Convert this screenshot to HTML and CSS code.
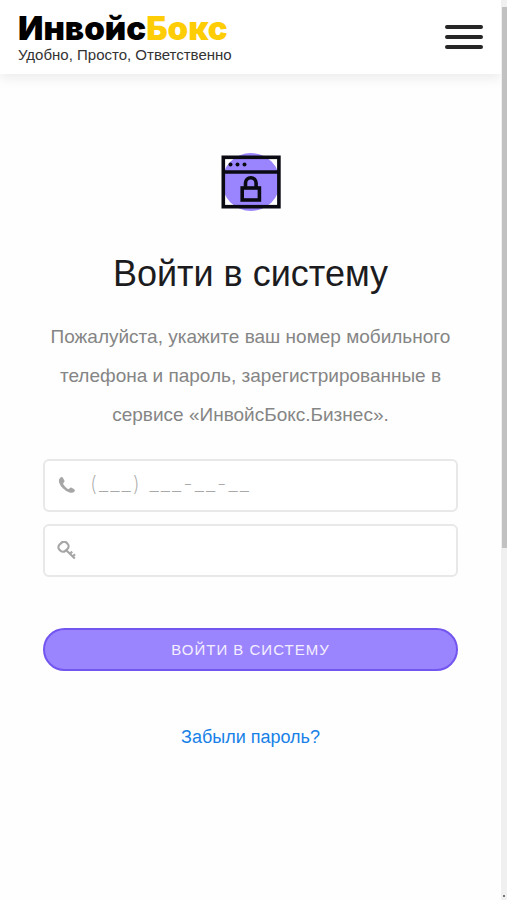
FILE: index.html
```html
<!DOCTYPE html>
<html lang="ru">
<head>
  <meta charset="utf-8">
  <meta name="viewport" content="width=device-width, initial-scale=1">
  <title>Войти в систему</title>
  <link rel="stylesheet" href="styles.css">
</head>
<body>
  <div class="page">
    <header class="header">
      <a class="logo" href="#">
        <span class="logo-name">Инвойс<span class="logo-accent">Бокс</span></span>
        <span class="logo-tagline">Удобно, Просто, Ответственно</span>
      </a>
      <button class="menu-button" type="button" aria-label="Меню">
        <span class="menu-line"></span>
        <span class="menu-line"></span>
        <span class="menu-line"></span>
      </button>
    </header>
    <main class="login">
      <svg class="login-icon" viewBox="0 0 60 60" aria-hidden="true">
        <circle cx="30" cy="30" r="29" fill="#9b85ff"/>
        <g fill="none" stroke="#0a0a12" stroke-width="3.6">
          <rect x="2.300" y="5.300" width="55.600" height="49.400"/>
          <path d="M2 20H59"/>
          <rect x="21.200" y="36" width="17.200" height="12"/>
          <path d="M24.500 36v-5a5.300 5.300 0 0 1 10.600 0v5"/>
        </g>
        <g fill="#0a0a12">
          <circle cx="9.500" cy="12.500" r="2"/>
          <circle cx="16.500" cy="12.500" r="2"/>
          <circle cx="23.500" cy="12.500" r="2"/>
        </g>
      </svg>
      <h1 class="title">Войти в систему</h1>
      <p class="intro">Пожалуйста, укажите ваш номер мобильного телефона и пароль, зарегистрированные в сервисе «ИнвойсБокс.Бизнес».</p>
      <form class="form">
        <div class="field">
          <label class="field-label" for="phone" aria-label="Телефон">
            <svg class="field-icon" viewBox="0 0 20 20">
              <path fill="#a6a6a6" d="M3.200 1.700Q5 .3 6 1.900L7.400 4.500Q8 5.900 6.600 6.800Q5.800 7.400 6.300 8.300Q8 11.200 10.900 12.900Q11.800 13.300 12.400 12.500Q13.300 11.100 14.700 11.800L17.200 13.200Q18.600 14 17.400 15.700Q15.700 17.500 12.500 16.500Q4.500 13.500 2 6.300Q1.300 3.300 3.200 1.700Z"/>
            </svg>
          </label>
          <input class="field-input" id="phone" type="tel" placeholder="(___) ___-__-__">
        </div>
        <div class="field">
          <label class="field-label" for="password" aria-label="Пароль">
            <svg class="field-icon" viewBox="0 0 20 20" fill="none" stroke="#a6a6a6" stroke-width="2.200">
              <rect x="1.500" y="1.500" width="10" height="8.500" rx="3.600" transform="rotate(-42 6.500 5.750)"/>
              <path d="M9 9L17.800 17.500M13 12.800l2.200-2.200M15.800 15.500l2.200-2.200"/>
            </svg>
          </label>
          <input class="field-input" id="password" type="password">
        </div>
        <button class="submit" type="submit">Войти в систему</button>
      </form>
      <a class="forgot" href="#">Забыли пароль?</a>
    </main>
  </div>
  <div class="scrollbar" aria-hidden="true">
    <span class="scroll-arrow"></span>
    <span class="scroll-thumb"></span>
    <span class="scroll-rest"></span>
    <span class="scroll-arrow scroll-arrow-down"></span>
  </div>
</body>
</html>
```
FILE: styles.css
```css
* {
  box-sizing: border-box;
}

body {
  display: flex;
  min-height: 100vh;
  margin: 0;
  background: #fefefe;
  color: #1c1c1e;
  font-family: "Liberation Sans", Arial, sans-serif;
}

.page {
  flex: 1;
  min-width: 0;
}

.header {
  display: flex;
  align-items: center;
  justify-content: space-between;
  height: 74px;
  padding: 0 18px;
  background: #fff;
  box-shadow: 0 4px 12px rgba(0, 0, 0, 0.08);
}

.logo {
  display: flex;
  flex-direction: column;
  color: #000;
  text-decoration: none;
}

.logo-name {
  font-family: Inter, sans-serif;
  font-size: 33px;
  font-weight: 900;
  line-height: 36px;
}

.logo-accent {
  color: #ffcd05;
}

.logo-tagline {
  color: #333;
  font-size: 15px;
  line-height: 18px;
}

.menu-button {
  display: flex;
  flex-direction: column;
  gap: 6px;
  width: 38px;
  padding: 0;
  border: 0;
  background: none;
}

.menu-line {
  width: 100%;
  height: 4px;
  border-radius: 2px;
  background: #262626;
}

.login {
  display: flex;
  flex-direction: column;
  align-items: center;
  padding: 78px 43px 40px;
}

.login-icon {
  width: 60px;
  height: 60px;
}

.title {
  margin: 37px 0 18px;
  font-size: 36px;
  font-weight: 400;
  line-height: 50px;
}

.intro {
  margin: 0;
  color: #858585;
  font-size: 19px;
  line-height: 39px;
  text-align: center;
}

.form {
  display: flex;
  flex-direction: column;
  gap: 12px;
  width: 100%;
  margin-top: 25px;
}

.field {
  display: flex;
  align-items: center;
  height: 53px;
  border: 2px solid #e8e8e8;
  border-radius: 6px;
  background: #fff;
}

.field-label {
  display: flex;
  padding: 0 13px 0 12px;
}

.field-icon {
  width: 20px;
  height: 20px;
}

.field-input {
  flex: 1;
  min-width: 0;
  padding: 0 0 4px;
  border: 0;
  outline: 0;
  background: none;
  font-family: Inter, sans-serif;
  font-size: 21px;
  font-weight: 200;
  letter-spacing: 2px;
}

.field-input::placeholder {
  color: #a8a8a8;
}

.submit {
  height: 43px;
  margin-top: 39px;
  border: 2px solid #7355ef;
  border-radius: 22px;
  background: #9b85ff;
  color: #f4efff;
  font-family: inherit;
  font-size: 15px;
  letter-spacing: 1px;
  text-transform: uppercase;
}

.forgot {
  margin-top: 53px;
  color: #1781e8;
  font-size: 18px;
  line-height: 26px;
  text-decoration: none;
}

.scrollbar {
  display: flex;
  flex-direction: column;
  width: 6px;
  background: #f0f0f0;
}

.scroll-arrow {
  height: 7px;
}

.scroll-arrow-down::before {
  display: block;
  width: 2px;
  height: 2px;
  margin: 2px auto;
  background: #777;
  content: "";
}

.scroll-thumb {
  flex: 541;
  margin-left: 1px;
  background: #c1c1c1;
}

.scroll-rest {
  flex: 345;
}
```
